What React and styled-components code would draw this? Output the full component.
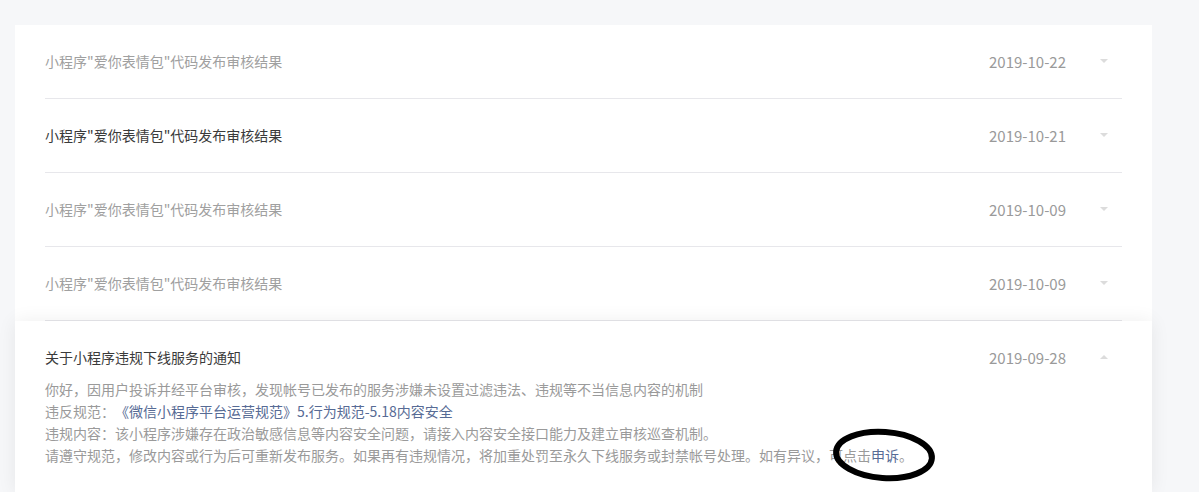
import React from "react";
import styled, { createGlobalStyle } from "styled-components";

const GlobalStyle = createGlobalStyle`
  html, body {
    margin: 0;
    padding: 0;
    background: #f6f7f9;
    font-family: "Noto Sans CJK SC", "Liberation Sans", sans-serif;
    text-spacing-trim: space-all;
  }
`;

const Page = styled.div`
  padding: 25px 47px 0 15px;
  height: 467px;
  overflow: hidden;
`;

const Card = styled.div`
  background: #fff;
  border-radius: 3px;
`;

const Item = styled.div`
  padding: 0 30px;
  position: relative;
  background: #fff;
  ${(p) =>
    p.$open &&
    `
    z-index: 1;
    box-shadow: 0 0 18px rgba(0, 0, 0, 0.07);
  `}
`;

const ItemInner = styled.div`
  padding: 25px 0 26px;
  border-bottom: ${(p) => (p.$last ? "none" : "1px solid #e7e7eb")};
`;

const Head = styled.div`
  display: flex;
  align-items: center;
  height: 22px;
`;

const Title = styled.div`
  flex: 1;
  font-size: 14px;
  line-height: 22px;
  color: ${(p) => (p.$unread ? "#3a3a3a" : "#a0a0a0")};
`;

const Date = styled.div`
  font-size: 15px;
  color: #9a9a9a;
  margin-right: 34px;
`;

const Arrow = styled.span`
  width: 0;
  height: 0;
  margin-right: 14px;
  border-left: 4px solid transparent;
  border-right: 4px solid transparent;
  ${(p) =>
    p.$up
      ? "border-bottom: 4px solid #dcdcdc;"
      : "border-top: 4px solid #dcdcdc;"}
`;

const Body = styled.div`
  margin-top: 10px;
  font-size: 14px;
  line-height: 22px;
  color: #9a9a9a;
`;

const Link = styled.span`
  color: #576b95;
`;

const Marked = styled.span`
  position: relative;
`;

const Mark = styled.svg`
  position: absolute;
  left: 2px;
  top: -19px;
  width: 110px;
  height: 58px;
  overflow: visible;
  pointer-events: none;
`;

const items = [
  { title: '小程序"爱你表情包"代码发布审核结果', date: "2019-10-22" },
  { title: '小程序"爱你表情包"代码发布审核结果', date: "2019-10-21", unread: true },
  { title: '小程序"爱你表情包"代码发布审核结果', date: "2019-10-09" },
  { title: '小程序"爱你表情包"代码发布审核结果', date: "2019-10-09" },
];

export default function App() {
  return (
    <>
      <GlobalStyle />
      <Page>
        <Card>
          {items.map((it, i) => (
            <Item key={i}>
              <ItemInner>
                <Head>
                  <Title $unread={it.unread}>{it.title}</Title>
                  <Date>{it.date}</Date>
                  <Arrow />
                </Head>
              </ItemInner>
            </Item>
          ))}
          <Item $open>
            <ItemInner $last>
              <Head>
                <Title $unread>关于小程序违规下线服务的通知</Title>
                <Date>2019-09-28</Date>
                <Arrow $up />
              </Head>
              <Body>
                <div>
                  你好，因用户投诉并经平台审核，发现帐号已发布的服务涉嫌未设置过滤违法、违规等不当信息内容的机制
                </div>
                <div>
                  违反规范：<Link>《微信小程序平台运营规范》5.行为规范-5.18内容安全</Link>
                </div>
                <div>
                  违规内容：该小程序涉嫌存在政治敏感信息等内容安全问题，请接入内容安全接口能力及建立审核巡查机制。
                </div>
                <div>
                  请遵守规范，修改内容或行为后可重新发布服务。如果再有违规情况，将加重处罚至永久下线服务或封禁帐号处理。如有异议，
                  <Marked>
                    可点击<Link>申诉</Link>。
                    <Mark viewBox="0 0 110 58">
                      <ellipse
                        cx="53"
                        cy="29"
                        rx="48"
                        ry="23"
                        fill="none"
                        stroke="#000"
                        strokeWidth="6"
                        transform="rotate(4 53 29)"
                      />
                    </Mark>
                  </Marked>
                </div>
              </Body>
            </ItemInner>
          </Item>
        </Card>
      </Page>
    </>
  );
}
